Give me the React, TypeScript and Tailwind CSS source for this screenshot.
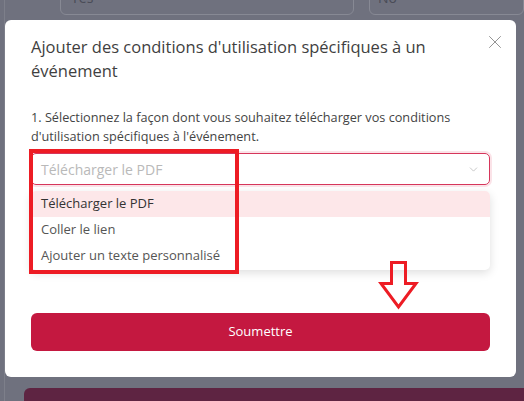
import { X, ChevronDown } from 'lucide-react'

const options = ['Télécharger le PDF', 'Coller le lien', 'Ajouter un texte personnalisé']

export default function App() {
  return (
    <div
      className="relative w-[524px] h-[401px] overflow-hidden bg-[#6f717e]"
      style={{ fontFamily: '"Open Sans", "Noto Sans", sans-serif' }}
    >
      {/* page behind the overlay */}
      <div className="absolute left-[4px] top-0 bottom-0 w-px bg-[#7d7f8a]" />
      <div className="flex gap-[15px] pl-[60px] -mt-[16px]">
        <div className="w-[304px] h-[31px] rounded-md border border-[#878994] px-[10px] pt-[4px] text-[14px] leading-[18px] text-[#4a4c57]">Yes</div>
        <div className="w-[160px] h-[31px] rounded-md border border-[#878994] px-[8px] pt-[4px] text-[14px] leading-[18px] text-[#4a4c57]">No</div>
      </div>
      <div className="absolute left-[24px] right-0 top-[388px] h-[30px] rounded-tl-md bg-[#5e2442]" />

      {/* modal */}
      <div className="absolute left-[5px] top-[20px] w-[511px] h-[357px] rounded-md bg-white px-[26px] pt-[15px]">
        <button className="absolute right-[10px] top-[11px] text-[#8a8a8a]">
          <X size={22} strokeWidth={1} />
        </button>
        <h2 className="pr-[40px] text-[16.5px] leading-[24px] text-[#3f3f3f] font-normal">
          Ajouter des conditions d'utilisation spécifiques à un événement
        </h2>
        <p className="mt-[25px] text-[12.7px] leading-[19px] text-[#444]">
          1. Sélectionnez la façon dont vous souhaitez télécharger vos conditions d'utilisation spécifiques à l'événement.
        </p>
        <div className="mt-[7px] h-[32px] rounded-[5px] border border-[#d6365b] ring-2 ring-[#fbe3e8] flex items-center justify-between px-[9px]">
          <span className="text-[14px] text-[#b9b9b9]">Télécharger le PDF</span>
          <ChevronDown size={13} strokeWidth={1.2} className="text-[#aaa]" />
        </div>
        <div className="mt-[6px] rounded-[5px] bg-white shadow-[0_3px_10px_rgba(0,0,0,0.13)] pb-[1px] overflow-hidden">
          {options.map((o, i) => (
            <div
              key={o}
              className={
                i === 0
                  ? 'h-[26px] flex items-center px-[10px] text-[13px] bg-[#fde7e9] text-[#333] font-medium'
                  : 'h-[26px] flex items-center px-[10px] text-[13px] text-[#555]'
              }
            >
              {o}
            </div>
          ))}
        </div>
        <button className="mt-[43px] w-full h-[38px] rounded-md bg-[#c41840] text-white text-[13px]">
          Soumettre
        </button>
      </div>

      {/* annotations */}
      <div className="absolute left-[29px] top-[149px] w-[210px] h-[125px] border-4 border-[#ed1c24]" />
      <svg className="absolute left-[378px] top-[259px]" width="42" height="52" viewBox="378 259 42 52">
        <polygon
          points="391.5,262.5 405.5,262.5 405.5,283.5 416,283.5 398.5,307 381,283.5 391.5,283.5"
          fill="none"
          stroke="#ed1c24"
          strokeWidth="3"
        />
      </svg>
    </div>
  )
}
